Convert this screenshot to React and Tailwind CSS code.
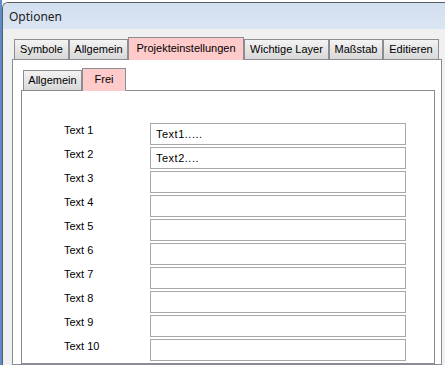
const outerTabs = [
  { label: 'Symbole', w: 'w-[55px]' },
  { label: 'Allgemein', w: 'w-[59px]' },
  { label: 'Projekteinstellungen', w: 'w-[116px]', active: true },
  { label: 'Wichtige Layer', w: 'w-[85px]' },
  { label: 'Maßstab', w: 'w-[54px]' },
  { label: 'Editieren', w: 'w-[56px]' },
]

const innerTabs = [
  { label: 'Allgemein', w: 'w-[59px]' },
  { label: 'Frei', w: 'w-[44px]', active: true },
]

const fields = [
  { label: 'Text 1', value: 'Text1.....' },
  { label: 'Text 2', value: 'Text2....' },
  { label: 'Text 3', value: '' },
  { label: 'Text 4', value: '' },
  { label: 'Text 5', value: '' },
  { label: 'Text 6', value: '' },
  { label: 'Text 7', value: '' },
  { label: 'Text 8', value: '' },
  { label: 'Text 9', value: '' },
  { label: 'Text 10', value: '' },
]

function Tab({ label, w, active }) {
  if (active) {
    return (
      <div
        className={`${w} h-[23px] -mb-px relative z-10 shrink-0 border border-b-0 border-[#8b8d93] bg-[#ffcaca] pt-[4px] text-center leading-[13px]`}
      >
        {label}
      </div>
    )
  }
  return (
    <div
      className={`${w} h-[20px] shrink-0 border border-b-0 border-[#8b8d93] bg-linear-to-b from-[#f3f3f3] to-[#d8d8d8] pt-[3px] text-center leading-[13px]`}
    >
      {label}
    </div>
  )
}

export default function App() {
  return (
    <div
      className="w-[445px] h-[365px] overflow-hidden bg-white flex text-[11px] text-black"
      style={{ fontFamily: '"Liberation Sans", Arial, sans-serif' }}
    >
      <div className="w-[2px] shrink-0 bg-[#5d8cc8]" />
      <div className="flex-1 mt-[2px] border-l border-t border-[#5c5c5c] rounded-tl-[6px] bg-[#f0f0f0] flex flex-col overflow-hidden">
        {/* title bar */}
        <div
          className="h-[26px] shrink-0 pl-[6px] pt-[1px] flex items-center bg-linear-to-b from-[#d2dfee] to-[#dbe6f4] text-[12px] text-[#222]"
          style={{ fontFamily: '"Noto Sans", "Open Sans", sans-serif' }}
        >
          Optionen
        </div>

        {/* body */}
        <div className="flex-1 pl-[9px] pt-[8px] flex flex-col">
          <div className="h-[22px] pl-[2px] flex items-end">
            {outerTabs.map((t) => (
              <Tab key={t.label} {...t} />
            ))}
          </div>

          <div className="w-[430px] flex-1 border border-[#898c95] bg-white pl-[8px] pt-[8px] flex flex-col">
            <div className="h-[22px] pl-[2px] flex items-end">
              {innerTabs.map((t) => (
                <Tab key={t.label} {...t} />
              ))}
            </div>

            <div className="w-[414px] flex-1 border border-[#898c95] bg-white pl-[42px] pt-[32px] flex flex-col gap-[2px]">
              {fields.map((f) => (
                <div key={f.label} className="h-[22px] flex items-start">
                  <div className="w-[86px] pt-[1px] leading-[13px]">{f.label}</div>
                  <input
                    readOnly
                    value={f.value}
                    className="w-[256px] h-[22px] border border-[#a9a9a9] bg-white px-[5px] text-[11px] tracking-[0.5px] text-black outline-none"
                    style={{ fontFamily: '"Liberation Sans", Arial, sans-serif' }}
                  />
                </div>
              ))}
            </div>
          </div>
        </div>
      </div>
    </div>
  )
}
